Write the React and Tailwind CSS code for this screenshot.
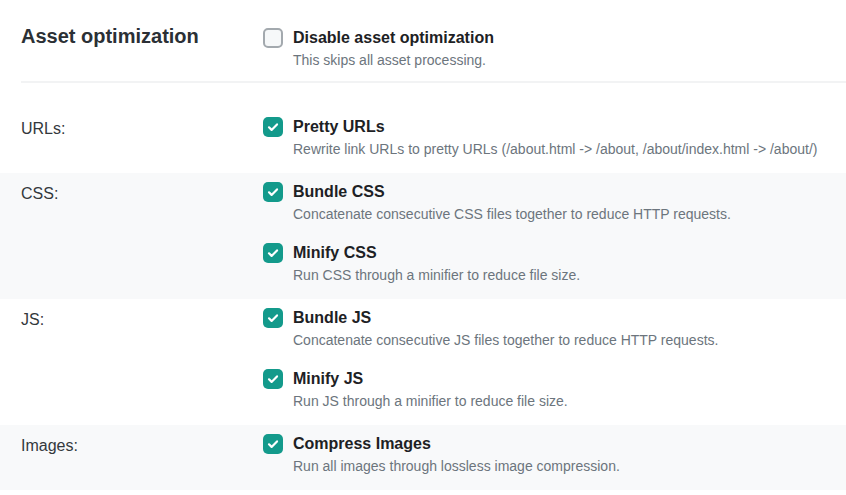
import React, { useState } from 'react';

const sections = [
    {
        label: 'URLs:',
        shaded: false,
        options: [
            { id: 'prettyUrls', title: 'Pretty URLs', desc: 'Rewrite link URLs to pretty URLs (/about.html -> /about, /about/index.html -> /about/)' }
        ]
    },
    {
        label: 'CSS:',
        shaded: true,
        options: [
            { id: 'bundleCss', title: 'Bundle CSS', desc: 'Concatenate consecutive CSS files together to reduce HTTP requests.' },
            { id: 'minifyCss', title: 'Minify CSS', desc: 'Run CSS through a minifier to reduce file size.' }
        ]
    },
    {
        label: 'JS:',
        shaded: false,
        options: [
            { id: 'bundleJs', title: 'Bundle JS', desc: 'Concatenate consecutive JS files together to reduce HTTP requests.' },
            { id: 'minifyJs', title: 'Minify JS', desc: 'Run JS through a minifier to reduce file size.' }
        ]
    },
    {
        label: 'Images:',
        shaded: true,
        options: [
            { id: 'compressImages', title: 'Compress Images', desc: 'Run all images through lossless image compression.' }
        ]
    }
];

const Checkbox = ({ checked, onChange }) => (
    <button
        type="button"
        onClick={onChange}
        className={
            checked
                ? 'mt-[2px] flex h-5 w-5 shrink-0 items-center justify-center rounded-[5px] bg-[#139a8b]'
                : 'mt-[2px] flex h-5 w-5 shrink-0 items-center justify-center rounded-[5px] border-2 border-[#a3a9ae] bg-[#f6f8f9]'
        }
    >
        {checked && (
            <svg width="12" height="12" viewBox="0 0 12 12" fill="none">
                <path d="M2 6.3l2.6 2.6L10 3.4" stroke="white" strokeWidth="2.2" strokeLinecap="round" strokeLinejoin="round" />
            </svg>
        )}
    </button>
);

const Option = ({ title, desc, checked, onChange }) => (
    <div className="flex gap-[10px]">
        <Checkbox checked={checked} onChange={onChange} />
        <div>
            <div className="text-[16px] leading-6 font-bold text-[#1d2124]">{title}</div>
            <div className="text-[14px] leading-5 text-[#6c757d]">{desc}</div>
        </div>
    </div>
);

const App = () => {
    const [values, setValues] = useState({
        disable: false,
        prettyUrls: true,
        bundleCss: true,
        minifyCss: true,
        bundleJs: true,
        minifyJs: true,
        compressImages: true
    });

    const toggle = (key) => setValues({ ...values, [key]: !values[key] });

    return (
        <div className="min-h-screen bg-white pt-[26px] font-['Liberation_Sans',Arial,sans-serif]">
            <div className="ml-[21px] flex border-b-2 border-[#f2f3f4] pb-[11px]">
                <h2 className="w-[242px] shrink-0 text-[20px] leading-[20px] font-bold text-[#2b3035]">Asset optimization</h2>
                <Option
                    title="Disable asset optimization"
                    desc="This skips all asset processing."
                    checked={values.disable}
                    onChange={() => toggle('disable')}
                />
            </div>

            <div className="mt-[25px]">
                {sections.map((section) => (
                    <div
                        key={section.label}
                        className={
                            section.shaded
                                ? 'flex bg-[#f8f9fa] px-[21px] pt-[7px] pb-[14px]'
                                : 'flex bg-white px-[21px] pt-[7px] pb-[14px]'
                        }
                    >
                        <div className="w-[242px] shrink-0 pt-[2px] text-[16px] leading-6 text-[#33383c]">{section.label}</div>
                        <div className="flex flex-col gap-[17px]">
                            {section.options.map((opt) => (
                                <Option
                                    key={opt.id}
                                    title={opt.title}
                                    desc={opt.desc}
                                    checked={values[opt.id]}
                                    onChange={() => toggle(opt.id)}
                                />
                            ))}
                        </div>
                    </div>
                ))}
            </div>
        </div>
    );
};

export default App;
